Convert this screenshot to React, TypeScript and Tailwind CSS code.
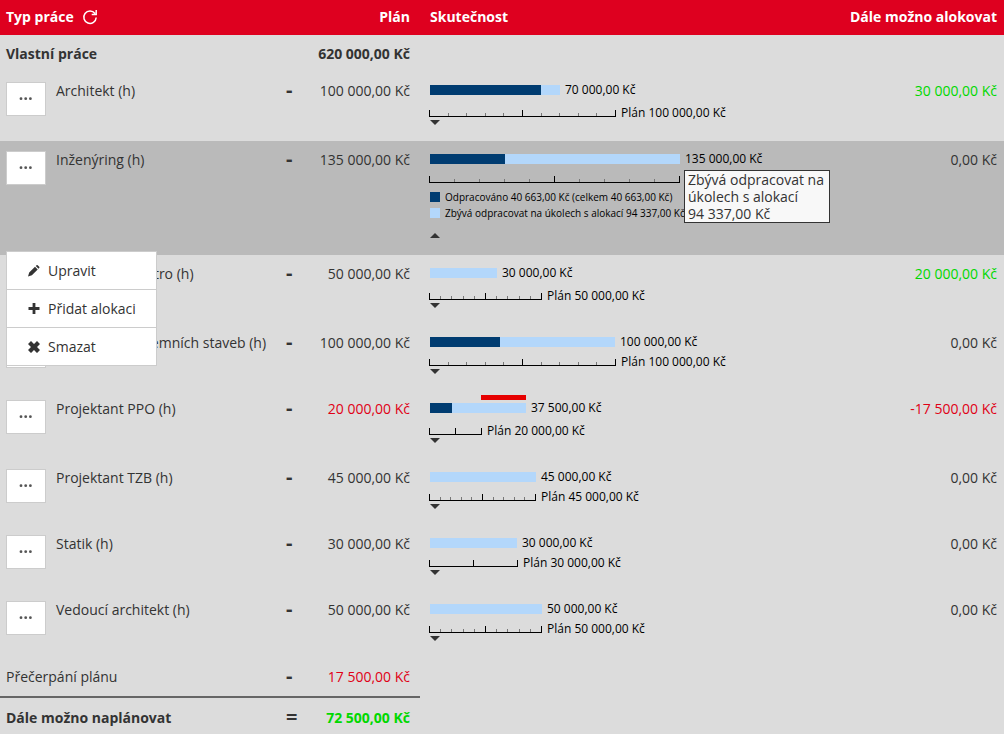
import React, { useState } from 'react'

interface WorkType {
  name: string
  plan: number
  actual: number
  remaining: number
  // widths in the chart, px
  doneWidth: number
  barWidth: number
  axisWidth: number
}

const workTypes: WorkType[] = [
  { name: 'Architekt (h)', plan: 100000, actual: 70000, remaining: 30000, doneWidth: 111, barWidth: 130, axisWidth: 187 },
  { name: 'Inženýring (h)', plan: 135000, actual: 135000, remaining: 0, doneWidth: 75, barWidth: 250, axisWidth: 251 },
  { name: 'Projektant elektro (h)', plan: 50000, actual: 30000, remaining: 20000, doneWidth: 0, barWidth: 67, axisWidth: 113 },
  { name: 'Projektant pozemních staveb (h)', plan: 100000, actual: 100000, remaining: 0, doneWidth: 70, barWidth: 185, axisWidth: 187 },
  { name: 'Projektant PPO (h)', plan: 20000, actual: 37500, remaining: -17500, doneWidth: 22, barWidth: 96, axisWidth: 53 },
  { name: 'Projektant TZB (h)', plan: 45000, actual: 45000, remaining: 0, doneWidth: 0, barWidth: 106, axisWidth: 107 },
  { name: 'Statik (h)', plan: 30000, actual: 30000, remaining: 0, doneWidth: 0, barWidth: 87, axisWidth: 89 },
  { name: 'Vedoucí architekt (h)', plan: 50000, actual: 50000, remaining: 0, doneWidth: 0, barWidth: 112, axisWidth: 113 }
]

const formatCzk = (value: number) => {
  const digits = Math.abs(value).toString().replace(/\B(?=(\d{3})+$)/g, '\u00a0')
  return `${value < 0 ? '-' : ''}${digits},00\u00a0Kč`
}

const Axis: React.FC<{ width: number }> = ({ width }) => {
  const last = width - 1
  const ticks = width > 100 ? [1, 2, 3, 4, 6, 7, 8, 9] : []
  return (
    <svg width={width} height="7" className="-ml-px block shrink-0" shapeRendering="crispEdges">
      {ticks.map(i => (
        <rect key={i} x={Math.round((last * i) / 10)} y="3" width="1" height="3" fill="#777" />
      ))}
      <path d={`M0 0h1v6h${Math.floor(last / 2) - 1}v-6h1v6H${last}V0h1v7H0z`} fill="#000" />
    </svg>
  )
}

const MoreButton: React.FC<{ label: string; onClick?: () => void }> = ({ label, onClick }) => (
  <button
    type="button"
    aria-label={label}
    onClick={onClick}
    className="flex h-[34px] w-10 shrink-0 items-center justify-center border border-[#ccc] bg-white"
  >
    <svg width="14" height="4" viewBox="0 0 14 4" fill="#555">
      <circle cx="2" cy="1.7" r="1.4" />
      <circle cx="6.7" cy="1.7" r="1.4" />
      <circle cx="11.4" cy="1.7" r="1.4" />
    </svg>
  </button>
)

const menuItems = [
  {
    label: 'Upravit',
    icon: <path d="M0 11.500l1.200-3.900L7 1.800l2.700 2.700-5.800 5.800zM7.800 1l.7-.7q.6-.5 1.200 0l1.500 1.500q.5.6 0 1.200l-.7.7z" />
  },
  { label: 'Přidat alokaci', icon: <path d="M4.600 0h2.800v4.100h4.100v2.800H7.400V11H4.600V6.900H.5V4.100h4.100z" /> },
  { label: 'Smazat', icon: <path d="M3 0l3 3 3-3 3 3-3 3 3 3-3 3-3-3-3 3-3-3 3-3-3-3z" /> }
]

const ActionMenu: React.FC = () => (
  <ul className="absolute left-1.5 top-[110px] z-10 w-[151px] divide-y divide-[#ccc] border border-[#ccc] bg-white">
    {menuItems.map(item => (
      <li key={item.label}>
        <button type="button" className="flex h-[37px] w-full items-center gap-2 pl-[21px] text-left">
          <svg width="12" height="12" viewBox="0 0 12 12" fill="#333">
            {item.icon}
          </svg>
          {item.label}
        </button>
      </li>
    ))}
  </ul>
)

const Legend: React.FC = () => (
  <ul className="mt-0.5 text-[10px] leading-4 whitespace-nowrap text-black">
    <li className="flex items-center gap-[5px]">
      <span className="h-2.5 w-2.5 bg-[#003c71]"></span>
      Odpracováno 40 663,00 Kč (celkem 40 663,00 Kč)
    </li>
    <li className="flex items-center gap-[5px]">
      <span className="h-2.5 w-2.5 bg-[#b3d7fb]"></span>
      Zbývá odpracovat na úkolech s alokací 94 337,00 Kč
    </li>
  </ul>
)

const Chart: React.FC<{ item: WorkType; open: boolean; onToggle: () => void }> = ({ item, open, onToggle }) => {
  const over = item.actual > item.plan
  return (
    <div className="relative pt-2.5 text-xs leading-4 whitespace-nowrap text-black">
      {/* Over plan */}
      {over && (
        <div
          className="absolute top-[5px] h-[5px] bg-[#e60000]"
          style={{ left: item.axisWidth - 2, width: item.barWidth - item.axisWidth + 2 }}
        ></div>
      )}
      <div className="flex items-center gap-[5px]">
        <div className="flex h-2.5 bg-[#b3d7fb]" style={{ width: item.barWidth }}>
          <div className="bg-[#003c71]" style={{ width: item.doneWidth }}></div>
        </div>
        {formatCzk(item.actual)}
      </div>

      {/* Plan scale */}
      <div className={`flex h-4 items-center gap-[5px] ${item.actual === item.plan ? 'mt-1' : 'mt-[7px]'}`}>
        <Axis width={item.axisWidth} />
        {!open && <>Plán {formatCzk(item.plan)}</>}
      </div>

      {open && <Legend />}
      <button
        type="button"
        aria-label={open ? 'Sbalit' : 'Rozbalit'}
        onClick={onToggle}
        className={`flex h-[5px] w-2.5 items-center justify-center ${open ? 'mt-3 mb-[17px]' : '-mt-px mb-4'}`}
      >
        <svg width="10" height="5" viewBox="0 0 10 5" fill="#333">
          <path d={open ? 'M0 5l5-5 5 5z' : 'M0 0h10L5 5z'} />
        </svg>
      </button>

      {open && (
        <div
          role="tooltip"
          className="absolute top-[29px] left-[254px] w-[146px] border border-[#333] bg-[#f8f8f8] px-[3px] text-sm leading-[17px] whitespace-normal text-[#333]"
        >
          Zbývá odpracovat na úkolech s alokací {formatCzk(94337)}
        </div>
      )}
    </div>
  )
}

const Sign: React.FC<{ children: React.ReactNode }> = ({ children }) => (
  <span className="w-5 shrink-0 text-xl leading-[18px] font-bold">{children}</span>
)

export default function App() {
  const [opened, setOpened] = useState('Inženýring (h)')
  const [menuFor, setMenuFor] = useState('Inženýring (h)')

  return (
    <div className="min-h-screen bg-[#dcdcdc] font-['Open_Sans',sans-serif] text-sm leading-5 text-[#333]">
      <table className="w-full table-fixed border-collapse">
        <colgroup>
          <col className="w-[280px]" />
          <col className="w-[140px]" />
          <col />
          <col className="w-[180px]" />
        </colgroup>
        <thead>
          <tr className="h-[35px] bg-[#de001f] text-white">
            <th className="pb-0.5 pl-1.5 text-left">
              <div className="flex items-center gap-2">
                Typ práce
                <button type="button" aria-label="Obnovit">
                  <svg width="16" height="16" viewBox="0 0 16 16" fill="none" stroke="#fff" strokeWidth="1.5">
                    <path d="M13 4.500A6.200 6.200 0 1 0 14.200 8.500M14.200 1v4.500H9.700" />
                  </svg>
                </button>
              </div>
            </th>
            <th className="pr-2.5 pb-0.5 text-right">Plán</th>
            <th className="pb-0.5 pl-2.5 text-left">Skutečnost</th>
            <th className="pr-[7px] pb-0.5 text-right">Dále možno alokovat</th>
          </tr>
        </thead>
        <tbody>
          <tr className="h-[37px] font-bold">
            <td className="pl-1.5">Vlastní práce</td>
            <td className="pr-2.5 text-right">{formatCzk(620000)}</td>
            <td></td>
            <td></td>
          </tr>

          {workTypes.map(item => {
            const open = opened === item.name
            const valueColor = item.remaining < 0 ? 'text-[#e00016]' : item.remaining > 0 ? 'text-[#00d800]' : ''
            return (
              <tr key={item.name} className={`align-top ${open ? 'bg-[#bababa]' : ''}`}>
                <td className="relative pt-2.5 pl-1.5">
                  <div className="flex gap-2.5">
                    <MoreButton
                      label={`Akce ${item.name}`}
                      onClick={() => setMenuFor(menuFor === item.name ? '' : item.name)}
                    />
                    <span className="-mt-px whitespace-nowrap">{item.name}</span>
                  </div>
                  {menuFor === item.name && <ActionMenu />}
                </td>
                <td className="pt-[9px] pr-2.5 pl-1.5">
                  <div className="flex justify-between">
                    <Sign>-</Sign>
                    <span className={item.remaining < 0 ? 'text-[#e00016]' : ''}>{formatCzk(item.plan)}</span>
                  </div>
                </td>
                <td className="pl-2.5">
                  <Chart item={item} open={open} onToggle={() => setOpened(open ? '' : item.name)} />
                </td>
                <td className={`pt-[9px] pr-[7px] text-right ${valueColor}`}>{formatCzk(item.remaining)}</td>
              </tr>
            )
          })}

          {/* Totals */}
          <tr className="h-10">
            <td className="border-b-2 border-[#666] pl-1.5">Přečerpání plánu</td>
            <td className="border-b-2 border-[#666] pr-2.5 pl-1.5">
              <div className="flex justify-between">
                <Sign>-</Sign>
                <span className="text-[#e00016]">{formatCzk(17500)}</span>
              </div>
            </td>
            <td></td>
            <td></td>
          </tr>
          <tr className="h-10 font-bold">
            <td className="pl-1.5">Dále možno naplánovat</td>
            <td className="pr-2.5 pl-1.5">
              <div className="flex justify-between">
                <Sign>=</Sign>
                <span className="text-[#00d800]">{formatCzk(72500)}</span>
              </div>
            </td>
            <td></td>
            <td></td>
          </tr>
        </tbody>
      </table>
    </div>
  )
}
